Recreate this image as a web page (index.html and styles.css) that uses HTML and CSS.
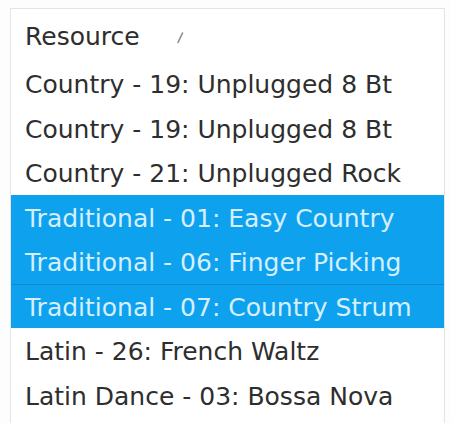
FILE: index.html
```html
<!DOCTYPE html>
<html lang="en">
<head>
    <meta charset="UTF-8">
    <title>Resource list</title>
    <link rel="stylesheet" href="styles.css">
</head>
<body>
    <div class="list-box">
        <div class="list-header">
            <span>Resource</span>
            <svg class="sort-mark" width="8" height="12" viewBox="0 0 8 12">
                <path d="M6.5 1 L2 10.5" stroke="#8a8a8a" stroke-width="1.6" stroke-linecap="round"/>
            </svg>
        </div>
        <ul class="rows">
            <li class="row">Country - 19: Unplugged 8 Bt</li>
            <li class="row">Country - 19: Unplugged 8 Bt</li>
            <li class="row">Country - 21: Unplugged Rock</li>
            <li class="row selected">Traditional - 01: Easy Country</li>
            <li class="row selected">Traditional - 06: Finger Picking</li>
            <li class="row selected split">Traditional - 07: Country Strum</li>
            <li class="row">Latin - 26: French Waltz</li>
            <li class="row">Latin Dance - 03: Bossa Nova</li>
        </ul>
    </div>
</body>
</html>
```

FILE: styles.css
```css
body {
    margin: 0;
    padding: 8px 6px 0 10px;
    background-color: #fdfdfd;
    font-family: "DejaVu Sans", sans-serif;
    color: #2e2e2e;
    overflow: hidden;
}
.list-box {
    background-color: white;
    border: 1px solid #e4e4e4;
    border-bottom: none;
    height: 440px;
}
.list-header {
    display: flex;
    align-items: center;
    gap: 36px;
    height: 52px;
    padding-top: 3px;
    padding-left: 14px;
    box-sizing: border-box;
    font-size: 25px;
}
.sort-mark {
    margin-top: 2px;
}
.rows {
    list-style: none;
    margin: 0;
    padding: 0;
}
.row {
    height: 44.5px;
    line-height: 41.5px;
    padding-top: 3px;
    padding-left: 14px;
    box-sizing: border-box;
    font-size: 25px;
    white-space: nowrap;
}
.selected {
    background-color: #0ea2ee;
    color: #d6efff;
}
.split {
    border-top: 1px solid #1489cf;
    line-height: 40.5px;
}
```
